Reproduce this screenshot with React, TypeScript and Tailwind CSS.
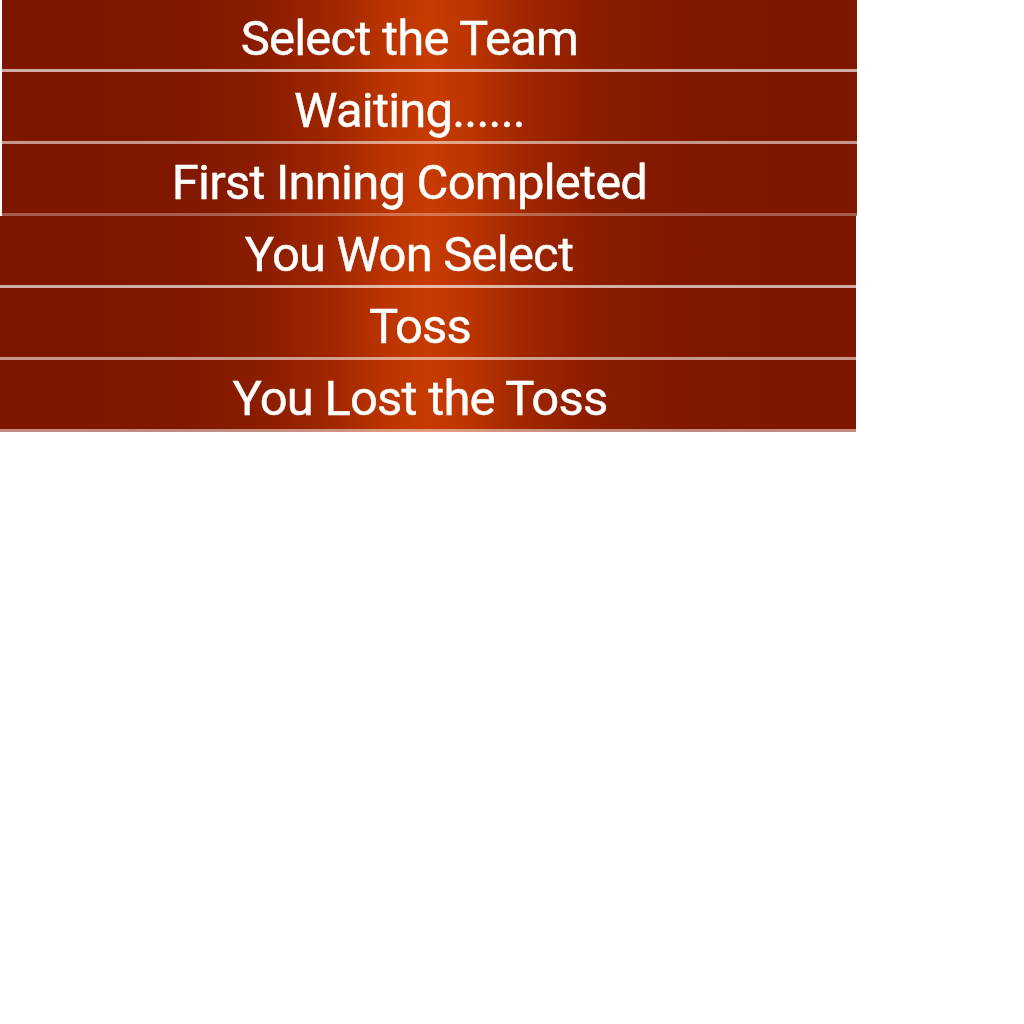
const banners = [
  { label: 'Select the Team', wrap: 'ml-[2px] w-[855px]', text: 'pr-[40px]', line: 'bg-white/65' },
  { label: 'Waiting......', wrap: 'ml-[2px] w-[855px]', text: 'pr-[40px]', line: 'bg-white/55' },
  { label: 'First Inning Completed', wrap: 'ml-[2px] w-[855px]', text: 'pr-[40px]', line: 'bg-white/30' },
  { label: 'You Won Select', wrap: 'w-[856px]', text: 'pr-[38px]', line: 'bg-white/65' },
  { label: 'Toss', wrap: 'w-[856px]', text: 'pr-[16px]', line: 'bg-white/55' },
  { label: 'You Lost the Toss', wrap: 'w-[856px]', text: 'pr-[16px]', line: 'bg-white/50' },
];

const Banner = ({ label, wrap, text, line }: { label: string; wrap: string; text: string; line: string }) => {
  return (
    <div className={`${wrap} h-[72px] flex flex-col bg-[linear-gradient(to_right,#7e1600_0%,#801700_20%,#8a1c00_30%,#a02700_39%,#bb3401_45%,#c83b02_50%,#bb3401_55%,#a02700_61%,#8a1c00_70%,#801700_82%,#7e1600_100%)]`}>
      <div className={`flex-1 flex items-center justify-center ${text}`}>
        <span className="text-white text-[49px] leading-none tracking-[-0.8px] font-['Roboto',sans-serif] pt-[7px] [-webkit-text-stroke:0.4px_white]">
          {label}
        </span>
      </div>
      <div className={`h-[3px] ${line}`} />
    </div>
  );
};

export default function App() {
  return (
    <div className="w-[1024px] h-[1024px] bg-white">
      {banners.map(b => (
        <Banner key={b.label} {...b} />
      ))}
    </div>
  );
}
